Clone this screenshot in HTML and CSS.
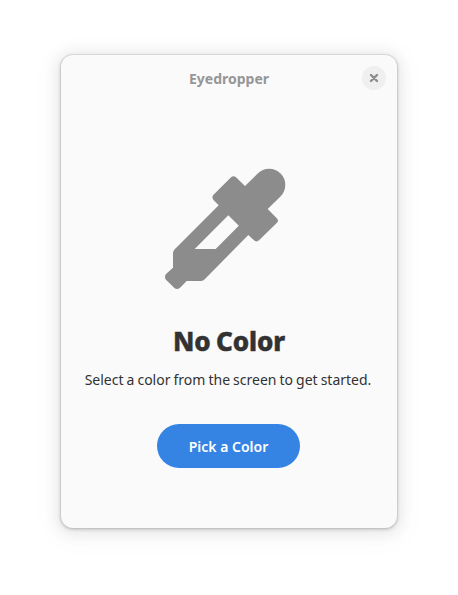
FILE: index.html
```html
<!DOCTYPE html>
<html lang="en">
<head>
<meta charset="utf-8">
<title>Eyedropper</title>
<link rel="stylesheet" href="styles.css">
</head>
<body>
<main class="window">
  <header class="headerbar">
    <span class="title">Eyedropper</span>
    <button class="close" aria-label="Close"><svg width="16" height="16" viewBox="0 0 16 16"><path d="M5 5l6 6M11 5l-6 6" stroke="currentColor" stroke-width="2.4" stroke-linecap="round"/></svg></button>
  </header>
  <section class="status">
    <svg class="icon" width="128" height="128" viewBox="0 0 128 128"><path fill="currentColor" fill-rule="evenodd" d="M80 25 92.7 12.5A16 16 0 0 1 115.5 35.5L102.7 48 112 57.4Q114 59.7 112 61.8L94 79.3Q91.5 81.5 89 79.3L83.3 74 40 118Q38.3 120 36 120H21.7L14.8 127Q12 129 9.4 127L1 118.7Q-1 116 1 113L8 106.7V92Q8 90 9.5 88.5L53.7 44.3 48.5 39Q46.3 36.3 48.5 33.7L65.8 16.4Q68.5 14 71 16.2ZM63.3 54.3 29.7 88H50.7L73.8 64.7Z"/></svg>
    <h1 class="heading">No Color</h1>
    <p class="description">Select a color from the screen to get started.</p>
    <button class="pick">Pick a Color</button>
  </section>
</main>
</body>
</html>
```
FILE: styles.css
```css
* { box-sizing: border-box; }
body { display: flow-root; min-height: 100vh; margin: 0; background: #fff; font-family: "Noto Sans", sans-serif; color: #323232; }
.window { width: 336px; height: 473px; margin: 55px 0 0 61px; border-radius: 12px; background: #fafafa; box-shadow: 0 0 0 1px rgba(0,0,0,.05), 0 1px 3px 1px rgba(0,0,0,.15), 0 2px 14px 5px rgba(0,0,0,.07), 0 4px 28px 12px rgba(0,0,0,.02); }
button { border: 0; padding: 0; font: inherit; }
.headerbar { display: grid; grid-template-columns: 1fr auto 1fr; align-items: center; height: 46px; padding: 0 11px; }
.title { grid-column: 2; padding-top: 2px; font-size: 14px; line-height: 20px; font-weight: 700; color: #969696; }
.close { justify-self: end; width: 24px; height: 24px; border-radius: 50%; background: #efefef; color: #8c8c8c; display: grid; place-items: center; }
.status { display: flex; flex-direction: column; align-items: center; }
.icon { margin-top: 60px; overflow: visible; color: #8c8c8c; }
.heading { margin: 32px 0 0; font-size: 26px; line-height: 40px; font-weight: 800; letter-spacing: -.1px; word-spacing: -1.2px; -webkit-text-stroke: .5px #323232; }
.description { margin: 9px 2px 0 0; line-height: 20px; font-size: 14px; white-space: nowrap; word-spacing: -.6px; }
.pick { margin: 34px 1px 0 0; width: 143px; height: 44px; border-radius: 22px; background: #3584e4; color: #fff; font-weight: 600; font-size: 14px; }
```
